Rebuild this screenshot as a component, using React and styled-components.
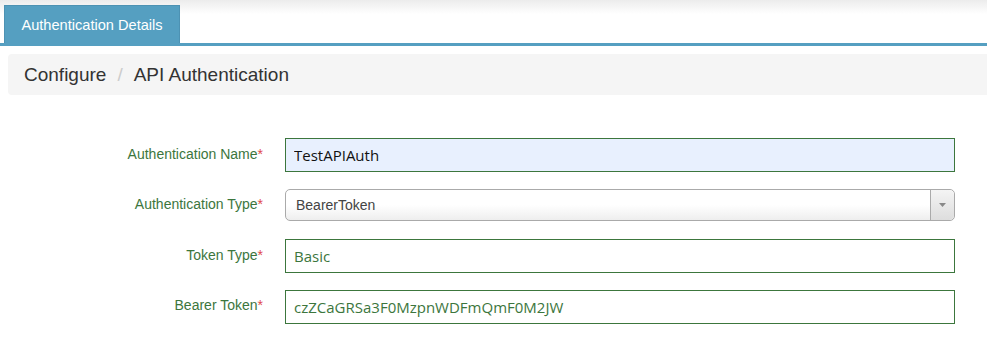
import { createGlobalStyle, styled } from "styled-components";

const GlobalStyle = createGlobalStyle`
  html, body {
    margin: 0;
    padding: 0;
    background: #fff;
    font-family: "Liberation Sans", Arial, sans-serif;
  }
`;

const fields = [
  { label: "Authentication Name", value: "TestAPIAuth", autofill: true },
  { label: "Authentication Type", value: "BearerToken", select: true },
  { label: "Token Type", value: "Basic" },
  { label: "Bearer Token", value: "czZCaGRSa3F0MzpnWDFmQmF0M2JW" },
];

const App = () => {
  return (
    <StPage>
      <GlobalStyle />
      <TabBar>
        <Tab>Authentication Details</Tab>
      </TabBar>

      <Breadcrumb>
        <span>Configure</span>
        <Divider>/</Divider>
        <span>API Authentication</span>
      </Breadcrumb>

      <Form>
        {fields.map((f) => (
          <FormRow key={f.label}>
            <Label>
              {f.label}
              <Req>*</Req>
            </Label>
            {f.select ? (
              <SelectBox>
                <span>{f.value}</span>
                <SelectArrow>
                  <svg width="7" height="4" viewBox="0 0 7 4">
                    <path d="M0 0 L7 0 L3.5 4 Z" fill="#888" />
                  </svg>
                </SelectArrow>
              </SelectBox>
            ) : (
              <TextInput $autofill={f.autofill} defaultValue={f.value} readOnly />
            )}
          </FormRow>
        ))}
      </Form>
    </StPage>
  );
};

const StPage = styled.div`
  width: 987px;
  height: 351px;
  overflow: hidden;
  background: linear-gradient(to bottom, #ececec 0px, #fff 14px);
`;

const TabBar = styled.div`
  padding: 5px 0 0 4px;
  border-bottom: 3px solid #559fc1;
  display: flex;
`;

const Tab = styled.div`
  width: 176px;
  height: 38px;
  box-sizing: border-box;
  background: #559fc1;
  border: 1px solid #4d92b3;
  border-bottom: none;
  color: #fff;
  font-size: 14.6px;
  display: flex;
  align-items: center;
  justify-content: center;
`;

const Breadcrumb = styled.div`
  margin: 8px 0 0 8px;
  height: 41px;
  padding-left: 16px;
  background: #f5f5f5;
  border-radius: 4px 0 0 4px;
  display: flex;
  align-items: center;
  font-size: 19px;
  color: #333;
`;

const Divider = styled.span`
  color: #ccc;
  padding: 0 11px;
`;

const Form = styled.div`
  padding-top: 43px;
  display: flex;
  flex-direction: column;
  gap: 16.67px;
`;

const FormRow = styled.div`
  height: 34px;
  display: flex;
  align-items: center;
  gap: 22px;
`;

const Label = styled.label`
  width: 263px;
  text-align: right;
  font-size: 14px;
  color: #3c763d;
  margin-top: -3px;
`;

const Req = styled.span`
  color: #e0474c;
`;

const TextInput = styled.input`
  width: 670px;
  height: 34px;
  box-sizing: border-box;
  padding: 0 8px;
  border: 1px solid #3c763d;
  outline: none;
  background: ${(p) => (p.$autofill ? "#e8f0fe" : "#fff")};
  color: ${(p) => (p.$autofill ? "#111" : "#3c763d")};
  font-family: "Open Sans", sans-serif;
  font-size: 15px;
`;

const SelectBox = styled.div`
  width: 670px;
  height: 32px;
  box-sizing: border-box;
  margin-top: -2px;
  border: 1px solid #aaa;
  border-radius: 5px;
  background: linear-gradient(to bottom, #fff 50%, #eee 100%);
  display: flex;
  align-items: center;
  justify-content: space-between;
  font-size: 14px;
  color: #444;

  span {
    padding-left: 10px;
  }
`;

const SelectArrow = styled.div`
  width: 23px;
  height: 100%;
  border-left: 1px solid #aaa;
  border-radius: 0 5px 5px 0;
  background: linear-gradient(to bottom, #f4f4f4, #ddd);
  display: flex;
  align-items: center;
  justify-content: center;
`;

export default App;
